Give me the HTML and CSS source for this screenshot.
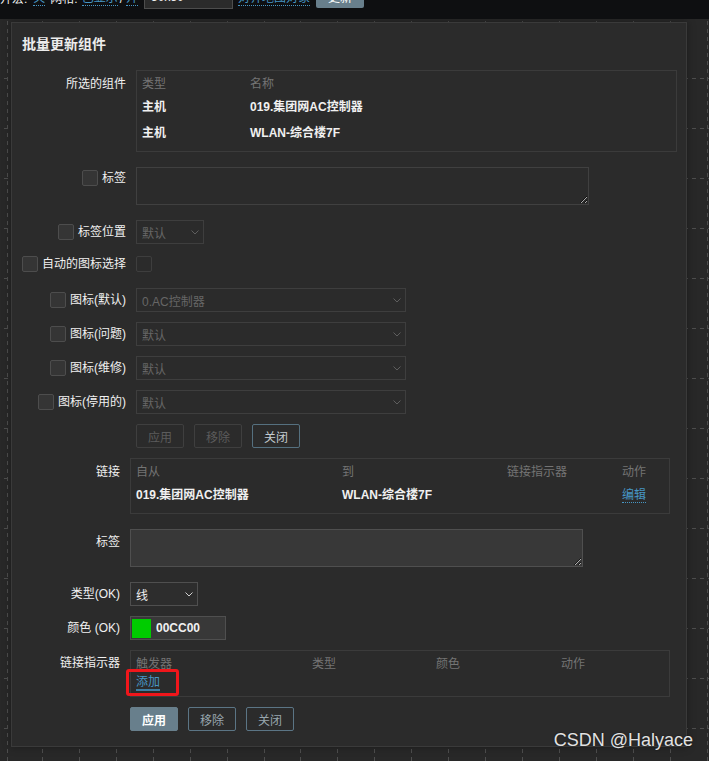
FILE: index.html
```html
<!DOCTYPE html>
<html lang="zh-CN">
<head>
<meta charset="utf-8">
<title>批量更新组件</title>
<link rel="stylesheet" href="styles.css">
</head>
<body>
<div class="toolbar">
  <div class="tb-inner">
    <span class="tb-text">展开宏:</span>
    <a class="tb-link l1">关</a>
    <span class="tb-text l2">网格:</span>
    <a class="tb-link l3">已显示</a>
    <span class="tb-text l4">/</span>
    <a class="tb-link l5">开</a>
    <div class="tb-select">
      <span>50x50</span>
      <svg class="chev" width="8" height="5" viewBox="0 0 8 5"><path d="M0.5 0.5 L4 4 L7.5 0.5" fill="none" stroke="#9a9a9a" stroke-width="1"/></svg>
    </div>
    <a class="tb-link l6">对齐地图对象</a>
    <button class="tb-btn">更新</button>
  </div>
</div>

<div class="canvas">
  <svg class="grid" width="709" height="742" viewBox="0 0 709 742">
    <g stroke="#4e4e4e" stroke-width="1" stroke-dasharray="4 4" stroke-dashoffset="4">
      <line x1="0" y1="59.5" x2="709" y2="59.5"/>
      <line x1="0" y1="109.5" x2="709" y2="109.5"/>
      <line x1="0" y1="159.5" x2="709" y2="159.5"/>
      <line x1="0" y1="209.5" x2="709" y2="209.5"/>
      <line x1="0" y1="259.5" x2="709" y2="259.5"/>
      <line x1="0" y1="309.5" x2="709" y2="309.5"/>
      <line x1="0" y1="359.5" x2="709" y2="359.5"/>
      <line x1="0" y1="409.5" x2="709" y2="409.5"/>
      <line x1="0" y1="459.5" x2="709" y2="459.5"/>
      <line x1="0" y1="509.5" x2="709" y2="509.5"/>
      <line x1="0" y1="559.5" x2="709" y2="559.5"/>
      <line x1="0" y1="609.5" x2="709" y2="609.5"/>
      <line x1="0" y1="659.5" x2="709" y2="659.5"/>
      <line x1="0" y1="709.5" x2="709" y2="709.5"/>
    </g>
    <g stroke="#4e4e4e" stroke-width="1" stroke-dasharray="4 4" stroke-dashoffset="-2">
      <line x1="7.5" y1="0" x2="7.5" y2="742"/>
      <line x1="42.5" y1="0" x2="42.5" y2="742"/>
      <line x1="79.5" y1="0" x2="79.5" y2="742"/>
      <line x1="116.5" y1="0" x2="116.5" y2="742"/>
      <line x1="153.5" y1="0" x2="153.5" y2="742"/>
      <line x1="190.5" y1="0" x2="190.5" y2="742"/>
      <line x1="227.5" y1="0" x2="227.5" y2="742"/>
      <line x1="264.5" y1="0" x2="264.5" y2="742"/>
      <line x1="300.5" y1="0" x2="300.5" y2="742"/>
      <line x1="337.5" y1="0" x2="337.5" y2="742"/>
      <line x1="374.5" y1="0" x2="374.5" y2="742"/>
      <line x1="411.5" y1="0" x2="411.5" y2="742"/>
      <line x1="448.5" y1="0" x2="448.5" y2="742"/>
      <line x1="485.5" y1="0" x2="485.5" y2="742"/>
      <line x1="522.5" y1="0" x2="522.5" y2="742"/>
      <line x1="559.5" y1="0" x2="559.5" y2="742"/>
      <line x1="596.5" y1="0" x2="596.5" y2="742"/>
      <line x1="633.5" y1="0" x2="633.5" y2="742"/>
      <line x1="670.5" y1="0" x2="670.5" y2="742"/>
      <line x1="707.5" y1="0" x2="707.5" y2="742"/>
    </g>
  </svg>

  <div class="panel">
    <h2 class="title">批量更新组件</h2>
    <div class="rows">

      <div class="row">
        <div class="lbl top first">所选的组件</div>
        <div class="tbl tbl-el">
          <div class="tr cols-el th"><span>类型</span><span>名称</span></div>
          <div class="tr cols-el td"><span>主机</span><span>019.集团网AC控制器</span></div>
          <div class="tr cols-el td"><span>主机</span><span>WLAN-综合楼7F</span></div>
        </div>
      </div>

      <div class="row ta">
        <div class="lbl cbtop"><span class="cb"></span><span>标签</span></div>
        <div><textarea class="txa" disabled></textarea></div>
      </div>

      <div class="row">
        <div class="lbl"><span class="cb"></span><span>标签位置</span></div>
        <div class="sel dis w68"><span>默认</span><svg class="chev" width="8" height="5" viewBox="0 0 8 5"><path d="M0.5 0.5 L4 4 L7.5 0.5" fill="none" stroke="#5e5e5e" stroke-width="1"/></svg></div>
      </div>

      <div class="row cbrow">
        <div class="lbl"><span class="cb"></span><span>自动的图标选择</span></div>
        <div class="fld"><span class="cb dis"></span></div>
      </div>

      <div class="row">
        <div class="lbl"><span class="cb"></span><span>图标(默认)</span></div>
        <div class="sel dis w270"><span>0.AC控制器</span><svg class="chev" width="8" height="5" viewBox="0 0 8 5"><path d="M0.5 0.5 L4 4 L7.5 0.5" fill="none" stroke="#5e5e5e" stroke-width="1"/></svg></div>
      </div>

      <div class="row">
        <div class="lbl"><span class="cb"></span><span>图标(问题)</span></div>
        <div class="sel dis w270"><span>默认</span><svg class="chev" width="8" height="5" viewBox="0 0 8 5"><path d="M0.5 0.5 L4 4 L7.5 0.5" fill="none" stroke="#5e5e5e" stroke-width="1"/></svg></div>
      </div>

      <div class="row">
        <div class="lbl"><span class="cb"></span><span>图标(维修)</span></div>
        <div class="sel dis w270"><span>默认</span><svg class="chev" width="8" height="5" viewBox="0 0 8 5"><path d="M0.5 0.5 L4 4 L7.5 0.5" fill="none" stroke="#5e5e5e" stroke-width="1"/></svg></div>
      </div>

      <div class="row">
        <div class="lbl"><span class="cb"></span><span>图标(停用的)</span></div>
        <div class="sel dis w270"><span>默认</span><svg class="chev" width="8" height="5" viewBox="0 0 8 5"><path d="M0.5 0.5 L4 4 L7.5 0.5" fill="none" stroke="#5e5e5e" stroke-width="1"/></svg></div>
      </div>

      <div class="row">
        <div></div>
        <div class="btns">
          <button class="btn dis">应用</button>
          <button class="btn dis">移除</button>
          <button class="btn sec light">关闭</button>
        </div>
      </div>

      <div class="row lk">
        <div class="lbl top first">链接</div>
        <div class="tbl tbl-lk">
          <div class="tr cols-lk th"><span>自从</span><span>到</span><span>链接指示器</span><span>动作</span></div>
          <div class="tr cols-lk td"><span>019.集团网AC控制器</span><span>WLAN-综合楼7F</span><span></span><span><a class="edit">编辑</a></span></div>
        </div>
      </div>

      <div class="row lk ta">
        <div class="lbl top">标签</div>
        <div><textarea class="txa on"></textarea></div>
      </div>

      <div class="row lk">
        <div class="lbl">类型(OK)</div>
        <div class="sel on w68"><span>线</span><svg class="chev" width="8" height="5" viewBox="0 0 8 5"><path d="M0.5 0.5 L4 4 L7.5 0.5" fill="none" stroke="#d0d0d0" stroke-width="1"/></svg></div>
      </div>

      <div class="row lk">
        <div class="lbl">颜色 (OK)</div>
        <div class="color"><span class="swatch"></span><span class="hex">00CC00</span></div>
      </div>

      <div class="row lk">
        <div class="lbl top">链接指示器</div>
        <div class="tbl tbl-ind">
          <div class="tr cols-ind th"><span>触发器</span><span>类型</span><span>颜色</span><span>动作</span></div>
          <div class="add-row"><span class="add-wrap"><a class="add">添加</a><span class="annot"></span></span></div>
        </div>
      </div>

      <div class="row lk">
        <div></div>
        <div class="btns">
          <button class="btn primary">应用</button>
          <button class="btn sec">移除</button>
          <button class="btn sec">关闭</button>
        </div>
      </div>

    </div>
  </div>

  <div class="watermark">CSDN @Halyace</div>
</div>
</body>
</html>
```

FILE: styles.css
```css
* { box-sizing: border-box; }
html, body { margin: 0; padding: 0; }
body {
  width: 709px;
  height: 761px;
  overflow: hidden;
  background: #282828;
  color: #f0f0f0;
  font-family: "Liberation Sans", "Noto Sans CJK SC", sans-serif;
  font-size: 12px;
  color-scheme: dark;
}

/* toolbar */
.toolbar {
  height: 19px;
  background: #0e0f11;
  overflow: hidden;
}
.tb-inner {
  display: flex;
  align-items: center;
  height: 24px;
  margin-top: -15px;
  margin-left: -12px;
  white-space: nowrap;
}
.tb-text { line-height: 14px; margin-top: 3px; color: #f0f0f0; }
.tb-link {
  color: #4796c4;
  line-height: 14px;
  margin-top: 3px;
  border-bottom: 1px dotted #4796c4;
}
.l1 { margin-left: 6px; }
.l2 { margin-left: 5px; }
.l3 { margin-left: 4px; }
.l4 { margin-left: 2px; }
.l5 { margin-left: 3px; }
.l6 { margin-left: 5px; }
.tb-select {
  margin-left: 6px;
  width: 89px;
  height: 24px;
  border: 1px solid #4d4d4d;
  background: #2b2b2b;
  display: flex;
  align-items: center;
  justify-content: space-between;
  padding: 0 6px;
  color: #f0f0f0;
}
.tb-btn {
  margin-left: 6px;
  margin-top: -2px;
  width: 48px;
  height: 24px;
  border: 0;
  border-radius: 2px;
  background: #687f8c;
  color: #ffffff;
  font: inherit;
  padding: 0;
}

/* canvas */
.canvas {
  position: relative;
  height: 742px;
  background: #282828;
  overflow: hidden;
}
.grid {
  position: absolute;
  left: 0;
  top: 0;
}
.panel {
  position: relative;
  margin: 3px 0 0 11px;
  width: 676px;
  height: 725px;
  background: #2b2b2b;
  border: 1px solid #3a3a3a;
  box-shadow: 0 0 8px rgba(0, 0, 0, 0.35);
  padding: 10px 8px 15px 10px;
}
.title {
  margin: 0 0 15px 0;
  font-size: 14px;
  line-height: 22px;
  font-weight: bold;
  color: #ececec;
}

.rows {
  display: flex;
  flex-direction: column;
  gap: 10px;
}
.row {
  display: grid;
  grid-template-columns: 104px auto;
  column-gap: 10px;
  align-items: center;
}
.row.lk { grid-template-columns: 98px auto; }
.row.ta { margin: 5px 0; }
.row.cbrow { margin: 2px 0 6px 0; }

.lbl {
  justify-self: end;
  display: flex;
  align-items: center;
  gap: 4px;
  line-height: 16px;
  white-space: nowrap;
  color: #f0f0f0;
}
.lbl.top { align-self: start; padding-top: 5px; }
.lbl.top.first { padding-top: 6px; }
.lbl.cbtop { align-self: start; padding-top: 3px; }
.fld { display: flex; align-items: center; height: 16px; }

.cb {
  display: inline-block;
  width: 16px;
  height: 16px;
  border: 1px solid #4d4d4d;
  background: #353535;
  border-radius: 2px;
}
.cb.dis { border-color: #3e3e3e; background: #2b2b2b; }

/* tables */
.tbl {
  border: 1px solid #3b3b3b;
  padding: 0 0 4px 5px;
}
.tbl-el { width: 541px; }
.tbl-lk, .tbl-ind { width: 540px; }
.tbl-ind { padding-bottom: 0; }
.tr { display: grid; }
.cols-el { grid-template-columns: 108px 1fr; }
.cols-lk { grid-template-columns: 206px 165px 115px 1fr; }
.cols-ind { grid-template-columns: 176px 124px 125px 1fr; }
.th {
  height: 24px;
  padding-top: 2px;
  line-height: 22px;
  color: #747474;
}
.td {
  height: 26px;
  padding-top: 5px;
  line-height: 14px;
  font-weight: bold;
  color: #f0f0f0;
}
.edit {
  display: inline-block;
  font-weight: normal;
  color: #4796c4;
  line-height: 14px;
  border-bottom: 1px dotted #4796c4;
}
.add-row { height: 21px; line-height: 14px; }
.add-wrap { position: relative; display: inline-block; }
.add {
  display: inline-block;
  color: #4796c4;
  line-height: 14px;
  border-bottom: 2px solid #3f7ea3;
}
.annot {
  position: absolute;
  left: -10px;
  top: -6px;
  width: 53px;
  height: 27px;
  border: 3px solid #f0161b;
  border-radius: 3px;
}

/* inputs */
.txa {
  display: block;
  width: 453px;
  height: 38px;
  margin: 0;
  padding: 2px 4px;
  border: 1px solid #404040;
  background: #2b2b2b;
  color: #f0f0f0;
  font: inherit;
  resize: both;
  outline: none;
}
.txa.on { border-color: #4f4f4f; background: #383838; }

.sel {
  height: 24px;
  border: 1px solid #3e3e3e;
  display: flex;
  align-items: center;
  justify-content: space-between;
  padding: 0 4px 0 5px;
  color: #666666;
}
.sel.on { border-color: #4f4f4f; color: #f0f0f0; background: #2d2d2d; }
.w68 { width: 68px; }
.w270 { width: 270px; }
.chev { display: block; flex: none; }

.color {
  width: 96px;
  height: 24px;
  border: 1px solid #4f4f4f;
  background: #383838;
  display: flex;
  align-items: center;
  gap: 5px;
  padding-left: 1px;
}
.swatch {
  width: 19px;
  height: 19px;
  background: #00cc00;
  flex: none;
}
.hex { font-weight: bold; color: #f0f0f0; }

/* buttons */
.btns { display: flex; gap: 10px; }
.btn {
  width: 48px;
  height: 24px;
  padding: 0;
  font: inherit;
  border-radius: 2px;
  border: 1px solid #3f3f3f;
  background: transparent;
  color: #5c5c5c;
}
.btn.sec { border-color: #5b7585; color: #98a6ae; }
.btn.sec.light { border-color: #55707f; color: #c4ccd0; }
.btn.primary {
  border-color: #687f8c;
  background: #687f8c;
  color: #ffffff;
  font-weight: bold;
}

.watermark {
  position: absolute;
  right: 16px;
  bottom: 12px;
  font-family: "Liberation Sans", sans-serif;
  font-size: 18px;
  line-height: 18px;
  color: #e2e2e2;
  text-shadow: 0 0 2px rgba(0, 0, 0, 0.6);
  white-space: nowrap;
}
```
